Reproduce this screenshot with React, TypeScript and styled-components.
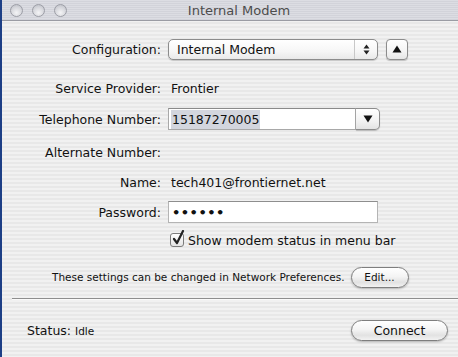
import React from "react";
import styled, { createGlobalStyle } from "styled-components";

const Global = createGlobalStyle`
  html, body { margin: 0; padding: 0; background: #1d3f86; }
  body { font-family: "DejaVu Sans", "Liberation Sans", sans-serif; }
`;

const Page = styled.div`
  width: 458px;
  height: 357px;
  display: flex;
  overflow: hidden;
  background: #1d3f86;
`;

const Window = styled.div`
  margin-left: 2px;
  flex: 1;
  display: flex;
  flex-direction: column;
  background: repeating-linear-gradient(
    to bottom,
    #f1f1f1 0px,
    #f1f1f1 2px,
    #e8e8e8 2px,
    #e8e8e8 4px
  );
`;

const TitleBar = styled.div`
  height: 20px;
  display: flex;
  align-items: center;
  position: relative;
  border-bottom: 1px solid #9a9ca4;
  background: repeating-linear-gradient(
    to bottom,
    #dcdde3 0px,
    #dcdde3 1px,
    #d2d3da 1px,
    #d2d3da 2px
  );
`;

const Lights = styled.div`
  display: flex;
  gap: 9px;
  padding-left: 8px;
`;

const Light = styled.div`
  width: 13px;
  height: 13px;
  border-radius: 50%;
  box-sizing: border-box;
  border: 1px solid #9c9ea6;
  background: radial-gradient(circle at 50% 70%, #f4f4f6 0%, #d6d7dc 55%, #b8bac2 100%);
`;

const Title = styled.div`
  position: absolute;
  left: 0;
  right: 0;
  text-align: center;
  font-size: 13px;
  color: #4c4c4c;
  pointer-events: none;
  padding-left: 18px;
`;

const Content = styled.div`
  display: flex;
  flex-direction: column;
  padding-top: 17px;
`;

const Row = styled.div<{ $mt: number }>`
  display: flex;
  align-items: center;
  height: 22px;
  margin-top: ${(p) => p.$mt}px;
`;

const Label = styled.div`
  width: 159px;
  text-align: right;
  font-size: 12.5px;
  color: #111;
  white-space: nowrap;
  margin-right: 7px;
`;

const Value = styled.div`
  font-size: 12.5px;
  color: #111;
  padding-left: 3px;
  white-space: nowrap;
`;

const Popup = styled.div`
  width: 210px;
  height: 21px;
  box-sizing: border-box;
  border: 1px solid #8c8c8c;
  border-radius: 5px;
  background: linear-gradient(to bottom, #ffffff 0%, #f6f6f6 60%, #e9e9e9 100%);
  box-shadow: 0 1px 1px rgba(0, 0, 0, 0.18);
  display: flex;
  align-items: center;
`;

const PopupText = styled.div`
  flex: 1;
  padding-left: 8px;
  font-size: 12.5px;
  color: #111;
`;

const PopupArrows = styled.div`
  width: 22px;
  height: 100%;
  border-left: 1px solid #c8c8c8;
  display: flex;
  align-items: center;
  justify-content: center;
`;

const SquareButton = styled.div`
  width: 22px;
  height: 21px;
  margin-left: 8px;
  box-sizing: border-box;
  border: 1px solid #8c8c8c;
  border-radius: 4px;
  background: linear-gradient(to bottom, #ffffff 0%, #f4f4f4 60%, #e6e6e6 100%);
  box-shadow: 0 1px 1px rgba(0, 0, 0, 0.2);
  display: flex;
  align-items: center;
  justify-content: center;
`;

const Combo = styled.div`
  width: 212px;
  height: 22px;
  display: flex;
`;

const ComboField = styled.div`
  flex: 1;
  box-sizing: border-box;
  border: 1px solid #a8a8a8;
  border-top-color: #8a8a8a;
  background: #fff;
  display: flex;
  align-items: center;
  padding-left: 2px;
`;

const Selection = styled.span`
  background: #d3d6de;
  font-size: 12.5px;
  color: #111;
  padding: 2px 1px;
`;

const ComboButton = styled.div`
  width: 24px;
  box-sizing: border-box;
  border: 1px solid #8c8c8c;
  border-left: none;
  border-radius: 0 5px 5px 0;
  background: linear-gradient(to bottom, #ffffff 0%, #f2f2f2 60%, #e3e3e3 100%);
  box-shadow: 0 1px 1px rgba(0, 0, 0, 0.2);
  display: flex;
  align-items: center;
  justify-content: center;
`;

const TextField = styled.div`
  width: 210px;
  height: 22px;
  box-sizing: border-box;
  border: 1px solid #b4b4b4;
  border-top-color: #8e8e8e;
  background: #fff;
  display: flex;
  align-items: center;
  padding-left: 3px;
  font-size: 13px;
  font-weight: bold;
  letter-spacing: 0.5px;
  color: #111;
`;

const CheckRow = styled.label`
  display: flex;
  align-items: center;
  margin-left: 168px;
  font-size: 12.5px;
  color: #111;
  gap: 4px;
`;

const CheckBox = styled.div`
  width: 14px;
  height: 14px;
  box-sizing: border-box;
  border: 1px solid #7c7c7c;
  border-radius: 3px;
  background: linear-gradient(to bottom, #ffffff, #e4e4e4);
  position: relative;
`;

const Note = styled.div`
  display: flex;
  align-items: center;
  padding-left: 50px;
  font-size: 10.5px;
  color: #111;
  gap: 6px;
`;

const PillButton = styled.div<{ $w: number; $fs: number }>`
  width: ${(p) => p.$w}px;
  height: 21px;
  box-sizing: border-box;
  border: 1px solid #7e7e7e;
  border-radius: 11px;
  background: linear-gradient(to bottom, #ffffff 0%, #f4f4f4 45%, #e2e2e2 75%, #f2f2f2 100%);
  box-shadow: 0 1px 2px rgba(0, 0, 0, 0.25);
  display: flex;
  align-items: center;
  justify-content: center;
  font-size: ${(p) => p.$fs}px;
  color: #111;
`;

const Separator = styled.div`
  margin-top: 10px;
  margin-left: 10px;
  height: 1px;
  background: #8e8e8e;
  border-bottom: 1px solid #fafafa;
`;

const StatusRow = styled.div`
  display: flex;
  align-items: center;
  justify-content: space-between;
  margin-top: 19px;
  height: 22px;
  padding-left: 25px;
  padding-right: 10px;
`;

const Status = styled.div`
  font-size: 12.5px;
  color: #111;
`;

const Small = styled.span`
  font-size: 10.5px;
`;

const Stepper = () => (
  <svg width="7" height="11" viewBox="0 0 7 11">
    <path d="M3.5 0.5 L6.5 4.5 L0.5 4.5 Z" fill="#222" />
    <path d="M3.5 10.5 L6.5 6.5 L0.5 6.5 Z" fill="#222" />
  </svg>
);

const TriUp = () => (
  <svg width="10" height="8" viewBox="0 0 10 8">
    <path d="M5 0.5 L9.5 7.5 L0.5 7.5 Z" fill="#111" />
  </svg>
);

const TriDown = () => (
  <svg width="10" height="8" viewBox="0 0 10 8">
    <path d="M0.5 0.5 L9.5 0.5 L5 7.5 Z" fill="#111" />
  </svg>
);

const Check = () => (
  <svg width="14" height="16" viewBox="0 0 14 16" style={{ position: "absolute", left: 1, top: -4 }}>
    <path d="M2 9 L5 13 L11 1" stroke="#222" strokeWidth="2.2" fill="none" strokeLinecap="round" strokeLinejoin="round" />
  </svg>
);

export default function App() {
  return (
    <>
      <Global />
      <Page>
        <Window>
          <TitleBar>
            <Lights>
              <Light />
              <Light />
              <Light />
            </Lights>
            <Title>Internal Modem</Title>
          </TitleBar>
          <Content>
            <Row $mt={0}>
              <Label>Configuration:</Label>
              <Popup>
                <PopupText>Internal Modem</PopupText>
                <PopupArrows>
                  <Stepper />
                </PopupArrows>
              </Popup>
              <SquareButton>
                <TriUp />
              </SquareButton>
            </Row>
            <Row $mt={17}>
              <Label>Service Provider:</Label>
              <Value>Frontier</Value>
            </Row>
            <Row $mt={9}>
              <Label>Telephone Number:</Label>
              <Combo>
                <ComboField>
                  <Selection>15187270005</Selection>
                </ComboField>
                <ComboButton>
                  <TriDown />
                </ComboButton>
              </Combo>
            </Row>
            <Row $mt={11}>
              <Label>Alternate Number:</Label>
            </Row>
            <Row $mt={8}>
              <Label>Name:</Label>
              <Value>tech401@frontiernet.net</Value>
            </Row>
            <Row $mt={8}>
              <Label>Password:</Label>
              <TextField>••••••</TextField>
            </Row>
            <Row $mt={6}>
              <CheckRow>
                <CheckBox>
                  <Check />
                </CheckBox>
                Show modem status in menu bar
              </CheckRow>
            </Row>
            <Row $mt={15}>
              <Note>
                These settings can be changed in Network Preferences.
                <PillButton $w={58} $fs={10.5}>Edit...</PillButton>
              </Note>
            </Row>
            <Separator />
            <StatusRow>
              <Status>
                Status: <Small>Idle</Small>
              </Status>
              <PillButton $w={97} $fs={12.5}>Connect</PillButton>
            </StatusRow>
          </Content>
        </Window>
      </Page>
    </>
  );
}
